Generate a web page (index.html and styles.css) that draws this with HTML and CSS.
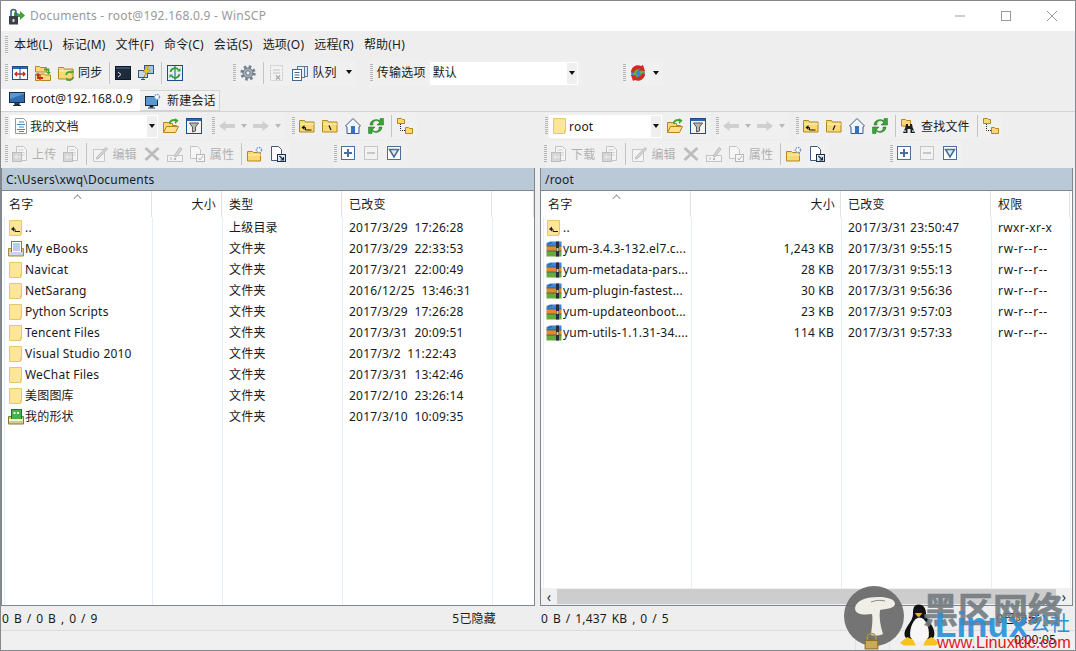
FILE: index.html
```html
<!DOCTYPE html>
<html lang="zh">
<head>
<meta charset="utf-8">
<title>Documents - root@192.168.0.9 - WinSCP</title>
<link rel="stylesheet" href="styles.css">
</head>
<body>
<svg class="defs" xmlns="http://www.w3.org/2000/svg">
  <symbol id="fld" viewBox="0 0 16 16"><path d="M.5 3.500V2.500h5l1 1.500h8.500v10H.5z" fill="#f9d976" stroke="#b5861c"/><path d="M1 6h14" stroke="#fff3c0"/></symbol>
  <symbol id="compare" viewBox="0 0 16 16"><rect x=".5" y="1.500" width="15" height="13" fill="#fff" stroke="#1c4c8c"/><rect x="1" y="2" width="14" height="2" fill="#2c66ad"/><path d="M8 2v12" stroke="#1c4c8c"/><path d="M3 9h10M5 7 3 9l2 2M11 7l2 2-2 2" fill="none" stroke="#c8261c" stroke-width="1.300"/></symbol>
  <symbol id="foldersync" viewBox="0 0 16 16"><path d="M.5 7V1.500h4l1 1h6V7z" fill="#f9d976" stroke="#b5861c"/><path d="M5.500 15.500V9h4l1 1h5v5.500z" fill="#f9d976" stroke="#b5861c"/><path d="M.5 15.500V9h4v6.500z" fill="#fbe08a" stroke="#b5861c"/><path d="M9 4.500h4.500V8" fill="none" stroke="#3fa535" stroke-width="1.800"/><path d="M11 7h5l-2.500 2.500z" fill="#3fa535"/><path d="M8 13H3V9.500" fill="none" stroke="#c8261c" stroke-width="1.800"/><path d="M.5 10.500h5L3 8z" fill="#c8261c"/></symbol>
  <symbol id="foldergreen" viewBox="0 0 16 16"><use href="#fld"/><path d="M8 10a3.500 3.500 0 0 1 6-2M15 12a3.500 3.500 0 0 1-6 2" fill="none" stroke="#3fa535" stroke-width="1.800"/><path d="M12.500 5.500h3v3zM11 15.500 8 15.500V12.500z" fill="#3fa535"/></symbol>
  <symbol id="term" viewBox="0 0 16 16"><rect x=".5" y="1.500" width="15" height="13" fill="#1f2a3a" stroke="#0f1622"/><rect x="1" y="2" width="14" height="2" fill="#33506f"/><path d="M3 7l3 2.500L3 12" fill="none" stroke="#d8e4ee"/></symbol>
  <symbol id="putty" viewBox="0 0 16 16"><rect x="6.500" y=".5" width="9" height="8" fill="#a7c4e2" stroke="#31557f"/><rect x=".5" y="5.500" width="9" height="7" fill="#c6d9ec" stroke="#31557f"/><path d="M3 14.500h4M5 12.500v2" stroke="#31557f"/><path d="M9 1 5 7h3L6 12l6-7H9l2-4z" fill="#f6c32d" stroke="#a67c10" stroke-width=".5"/></symbol>
  <symbol id="syncb" viewBox="0 0 16 16"><rect x=".5" y=".5" width="15" height="15" fill="#e7f0f8" stroke="#1c4c8c"/><path d="M8 1v14" stroke="#1c4c8c"/><path d="M3.500 7a4.500 4.500 0 0 1 8-2M12.500 9a4.500 4.500 0 0 1-8 2" fill="none" stroke="#2f9e35" stroke-width="1.700"/><path d="M10 6.500h3.500V3zM6 9.500H2.500V13z" fill="#2f9e35"/></symbol>
  <symbol id="gear" viewBox="0 0 16 16"><circle cx="8" cy="8" r="6.300" fill="none" stroke="#74808d" stroke-width="2.800" stroke-dasharray="2.500 2.450"/><circle cx="8" cy="8" r="5" fill="#a3aeb9" stroke="#66727f"/><circle cx="8" cy="8" r="2.200" fill="#eee" stroke="#66727f"/></symbol>
  <symbol id="check" viewBox="0 0 16 16"><rect x="1.500" y=".5" width="12" height="15" fill="#f1f1f1" stroke="#c8c8c8" stroke-dasharray="2 1"/><path d="M4 5h7M4 8h7" stroke="#c4c4c4"/><path d="M7 10.500l4 4M11 10.500l-4 4" stroke="#a8a8a8" stroke-width="1.300"/></symbol>
  <symbol id="queue" viewBox="0 0 16 16"><rect x="9.500" y="1.500" width="6" height="10" fill="#dbe6f0" stroke="#5a7a9c"/><rect x="5.500" y="1.500" width="7" height="11" fill="#e7eff6" stroke="#5a7a9c"/><rect x=".5" y="4.500" width="9" height="11" fill="#fff" stroke="#3e6690"/><path d="M2.500 7.500h5M2.500 10h5M2.500 12.500h5" stroke="#3e6690"/></symbol>
  <symbol id="globe" viewBox="0 0 16 16"><circle cx="8" cy="8" r="7" fill="#3f80d8"/><path d="M4 3l4 2-2 3 2 3-2 3-3-5zM10 5l4 1 1 3-4 2-1-3z" fill="#5fb34a"/><path d="M1 7a7 7 0 0 1 10-6l2-1 2 6-6-.5 1.500-1.500A5 5 0 0 0 4 8z" fill="#d42a20"/><path d="M15 9a7 7 0 0 1-10 6l-2 1-2-6 6 .5-1.500 1.500A5 5 0 0 0 12 8z" fill="#d42a20"/></symbol>
  <symbol id="monitor" viewBox="0 0 16 16"><rect x=".5" y="1.500" width="15" height="10" fill="#5a98d2" stroke="#1c2d42"/><path d="M1 8l14-5v8H1z" fill="#2e6eb0"/><path d="M6 12v1.500h4V12M4 14.500h8" stroke="#1c2d42" stroke-width="1.200" fill="#444"/></symbol>
  <symbol id="newsess" viewBox="0 0 16 16"><rect x=".5" y="3.500" width="12" height="9" fill="#5a98d2" stroke="#1c2d42"/><path d="M5 13v1h3v-1M3 15h7" stroke="#1c2d42"/><circle cx="12" cy="4" r="2.500" fill="#fff" stroke="#6c96c6" stroke-width="1.500" stroke-dasharray="1.500 .8"/></symbol>
  <symbol id="doc" viewBox="0 0 16 16"><path d="M2.500.5h8l3 3v12h-11z" fill="#fff" stroke="#8d99a5"/><path d="M6 4h5M4 6.500h8M6 9h5M4 11.500h8M6 13.500h5" stroke="#3a87c8"/></symbol>
  <symbol id="fopen" viewBox="0 0 16 16"><path d="M.5 14.500V4.500h5l1 1h3v2h4v2" fill="#f9d976" stroke="#b5861c"/><path d="M.5 14.500l3-6h12l-3 6z" fill="#fbe08a" stroke="#b5861c"/><path d="M6.500 5.500a4.500 4.500 0 0 1 6.500-3" fill="none" stroke="#3fa535" stroke-width="2"/><path d="M12 .2l3.600 2.300L12 6z" fill="#3fa535"/></symbol>
  <symbol id="filter" viewBox="0 0 16 16"><rect x=".5" y=".5" width="15" height="15" fill="#f3f3f3" stroke="#1c4c8c"/><rect x="1" y="1" width="14" height="2" fill="#2c66ad"/><path d="M3.500 5h9L9.500 9v4l-3 1V9z" fill="#b8b8b8" stroke="#555"/></symbol>
  <symbol id="back" viewBox="0 0 16 16"><path d="M0 8l6.500-5v3H16v4H6.500v3z" fill="#cfcfcf"/></symbol>
  <symbol id="fwd" viewBox="0 0 16 16"><path d="M16 8 9.500 3v3H0v4h9.500v3z" fill="#cfcfcf"/></symbol>
  <symbol id="fup" viewBox="0 0 16 16"><use href="#fld"/><path d="M2.500 9.500 5.500 7v5z" fill="#111"/><path d="M5 9.500h1.500V12H12.500" fill="none" stroke="#111"/></symbol>
  <symbol id="froot" viewBox="0 0 16 16"><use href="#fld"/><path d="M7 7.500l2 4.500" stroke="#111" stroke-width="1.200"/></symbol>
  <symbol id="froots" viewBox="0 0 16 16"><use href="#fld"/><path d="M9 7.500l-2 4.500" stroke="#111" stroke-width="1.200"/></symbol>
  <symbol id="home" viewBox="0 0 16 16"><path d="M8 .5 .5 8l1.500 1V15.500h12V9l1.500-1z" fill="#f2f5f8" stroke="#3c5d80"/><rect x="6" y="8" width="4" height="7.500" fill="#2f74c8"/></symbol>
  <symbol id="refresh" viewBox="0 0 16 16"><path d="M2 7A6 5.500 0 0 1 12 3V.5h3.500v6.500H9l2.500-2.500A3.500 3.500 0 0 0 5 7z" fill="#3aa335" stroke="#1f6e20" stroke-width=".5"/><path d="M14 9A6 5.500 0 0 1 4 13v2.500H.5V9H7l-2.500 2.500A3.500 3.500 0 0 0 11 9z" fill="#3aa335" stroke="#1f6e20" stroke-width=".5"/></symbol>
  <symbol id="tree" viewBox="0 0 16 16"><path d="M.5 5.500V.5h4l1 1h2v4zM8.500 15.500v-6h3l1 1h3v5z" fill="#f9d976" stroke="#b5861c"/><path d="M3.500 6v6.500h5" stroke="#222" stroke-dasharray="1 1" fill="none"/></symbol>
  <symbol id="upl" viewBox="0 0 16 16"><path d="M4.500 .5h7l3 3v11h-10z" fill="#f4f4f4" stroke="#c4c4c4"/><path d="M6.500 4h5M6.500 6.500h6M6.500 9h6" stroke="#cfcfcf"/><rect x=".5" y="6.500" width="9" height="9" fill="#d6d6d6" stroke="#bdbdbd"/><path d="M9 11H3M5 9l-2 2 2 2" stroke="#eee" fill="none"/></symbol>
  <symbol id="edit" viewBox="0 0 16 16"><path d="M1.500 3.500h11v12h-11z" fill="#f4f4f4" stroke="#c8c8c8"/><path d="M5 11l9-9.500 1.500 1.500L6.500 12.500 4.500 13z" fill="#d8d8d8" stroke="#b8b8b8"/></symbol>
  <symbol id="del" viewBox="0 0 16 16"><path d="M2.500 1 8 6l5.500-5L15.500 3 10 8l5.500 5-2 2L8 10l-5.500 5-2-2L6 8 .5 3z" fill="#bdbdbd"/></symbol>
  <symbol id="ren" viewBox="0 0 16 16"><rect x=".5" y="9.500" width="15" height="6" fill="#f4f4f4" stroke="#c4c4c4"/><path d="M4 11v3M7 12l2 2M9 12l-2 2" stroke="#b8b8b8"/><path d="M7 10l6-8.500 2 1.500-6 8z" fill="#d8d8d8" stroke="#b8b8b8"/></symbol>
  <symbol id="prop" viewBox="0 0 16 16"><path d="M.5 .5h7l3 3v9h-10z" fill="#f6f6f6" stroke="#c4c4c4"/><rect x="6.500" y="8.500" width="8" height="7" fill="#f6f6f6" stroke="#b8b8b8"/><path d="M8.500 12l1.500 2 3-4" fill="none" stroke="#b0b0b0"/></symbol>
  <symbol id="newf" viewBox="0 0 16 16"><path d="M.5 15V5.500h5l1 1h7V15z" fill="#f9d976" stroke="#b5861c"/><path d="M1 9h13" stroke="#fff0b0"/><circle cx="12" cy="4" r="2.500" fill="#fff" stroke="#7298c6" stroke-width="1.500" stroke-dasharray="1.500 .8"/></symbol>
  <symbol id="short" viewBox="0 0 16 16"><path d="M1.500 .5h7l3 3v11h-10z" fill="#fff" stroke="#3e5b7a"/><rect x="7.500" y="8.500" width="8" height="7" fill="#dde8f2" stroke="#1d2f45"/><path d="M9.500 10l4 4M13.500 11v3h-3" fill="none" stroke="#1d2f45" stroke-width="1.200"/></symbol>
  <symbol id="plus" viewBox="0 0 16 16"><rect x=".5" y=".5" width="13" height="13" fill="#fff" stroke="#4a6f9c"/><path d="M3 7h8M7 3v8" stroke="#4a6f9c" stroke-width="2"/></symbol>
  <symbol id="minus" viewBox="0 0 16 16"><rect x=".5" y=".5" width="13" height="13" fill="#f2f2f2" stroke="#c6c6c6"/><path d="M3 7h8" stroke="#c6c6c6" stroke-width="2"/></symbol>
  <symbol id="sel" viewBox="0 0 16 16"><rect x=".5" y=".5" width="13" height="13" fill="#fff" stroke="#4a6f9c"/><path d="M2.500 3.500h9L7 11z" fill="#dfe8f2" stroke="#4a6f9c" stroke-width="1.600"/></symbol>
  <symbol id="binoc" viewBox="0 0 16 16"><path d="M.5 8V1.500h4l1 1h4v6z" fill="#f9d976" stroke="#b5861c"/><path d="M5 6h2v2h2V6h2l.5 3L14 15H9.500V11h-3v4H2l2.500-6z" fill="#1e2024"/><rect x="3" y="12" width="2" height="2" fill="#8aa"/><rect x="11" y="12" width="2" height="2" fill="#8aa"/></symbol>
  <symbol id="pf" viewBox="0 0 16 16"><path d="M1.500 .5h12v13l-1 2h-11z" fill="#fde59a" stroke="#e6c66e"/><path d="M12.500 12.500h1M12.500 12.500v3" stroke="#e6c66e"/></symbol>
  <symbol id="pfup" viewBox="0 0 16 16"><use href="#pf"/><path d="M3 9 6 6.500v5z" fill="#222"/><path d="M5.500 9H7v2.500h5" fill="none" stroke="#222"/></symbol>
  <symbol id="ebook" viewBox="0 0 16 16"><path d="M.5 7.500h15v7.500H.5z" fill="#e3c67a" stroke="#a98a42"/><rect x="3.500" y=".5" width="10" height="11" fill="#fff" stroke="#4c7fb5"/><path d="M5 3h7M5 5h7M5 7h7M5 9h7" stroke="#6a9ecf"/><path d="M1 11h14v3H1z" fill="#c6d9ec"/></symbol>
  <symbol id="shape" viewBox="0 0 16 16"><path d="M.5 7.500h15V15H.5z" fill="#e3c67a" stroke="#8a7a30"/><rect x="3.500" y=".5" width="10" height="11" fill="#48b04c" stroke="#21752a"/><path d="M5.500 3h2v2h-2zM9 3h2v2H9z" fill="#eaf7e0"/><path d="M1 10h14v2H1z" fill="#eef5dd"/></symbol>
  <symbol id="rpm" viewBox="0 0 16 16"><path d="M.5 2 4 .5h11.500V5H.5z" fill="#3f86d6"/><path d="M.5 5h15v5H.5z" fill="#e08a2c"/><path d="M.5 10h15v5.500H.5z" fill="#63ab3a"/><rect x="10" y=".5" width="3" height="15" fill="#2b2b3a"/><path d="M2 3 6 1.500M.5 5h15M.5 10h15" stroke="#1f3f66" stroke-width=".6"/><rect x="10.500" y="7" width="2" height="3" fill="#e8d060"/></symbol>
</svg>

<div class="win">
  <header class="titlebar">
    <svg class="appicon" viewBox="0 0 17 17"><path d="M6 4l6 2v-3l5 4.500-5 4.500V9H9v5H6z" fill="#3fa535"/><rect x="1" y="8" width="9" height="8.500" fill="#3c3f46"/><path d="M3 8V4a2.500 2.500 0 0 1 5 0v4" fill="none" stroke="#3c5f9a" stroke-width="1.600"/><rect x="4.500" y="11" width="2" height="3" fill="#ddd"/></svg>
    <span class="titletext">Documents - root@192.168.0.9 - WinSCP</span>
    <div class="winbtns">
      <svg class="wb" viewBox="0 0 46 30"><path d="M18 15h10" stroke="#999"/></svg>
      <svg class="wb" viewBox="0 0 46 30"><rect x="18.500" y="10.500" width="9" height="9" fill="none" stroke="#999"/></svg>
      <svg class="wb" viewBox="0 0 46 30"><path d="M18 10l10 10M28 10 18 20" stroke="#999" fill="none"/></svg>
    </div>
  </header>

  <nav class="menubar">
    <i class="grip"></i>
    <span>本地(L)</span><span>标记(M)</span><span>文件(F)</span><span>命令(C)</span><span>会话(S)</span><span>选项(O)</span><span>远程(R)</span><span>帮助(H)</span>
  </nav>

  <div class="tbrow r-top">
    <div class="grp">
      <i class="grip"></i>
      <svg class="ic"><use href="#compare"/></svg>
      <svg class="ic"><use href="#foldersync"/></svg>
      <span class="btn"><svg class="ic"><use href="#foldergreen"/></svg>同步</span>
      <i class="sep"></i>
      <svg class="ic"><use href="#term"/></svg>
      <svg class="ic"><use href="#putty"/></svg>
      <i class="sep"></i>
      <svg class="ic"><use href="#syncb"/></svg>
    </div>
    <div class="grp m50">
      <i class="grip"></i>
      <svg class="ic"><use href="#gear"/></svg>
      <i class="sep"></i>
      <svg class="ic"><use href="#check"/></svg>
      <span class="btn"><svg class="ic"><use href="#queue"/></svg>队列<b class="dd mdd"></b></span>
    </div>
    <div class="grp m21">
      <i class="grip"></i>
      <span class="lbl">传输选项</span>
      <div class="combo c148"><span class="ctext">默认</span><b class="cbtn"><b class="dd"></b></b></div>
    </div>
    <div class="grp m48">
      <i class="grip"></i>
      <svg class="ic"><use href="#globe"/></svg>
      <b class="dd"></b>
    </div>
  </div>

  <div class="tabs">
    <div class="tab on"><svg class="ic"><use href="#monitor"/></svg>root@192.168.0.9</div>
    <div class="tab off"><svg class="ic"><use href="#newsess"/></svg>新建会话</div>
  </div>

  <div class="tbrow bordered">
    <div class="half lhalf">
      <div class="grp"><i class="grip g2"></i>
        <div class="combo c148"><svg class="ic"><use href="#doc"/></svg><span class="ctext t4">我的文档</span><b class="cbtn"><b class="dd"></b></b></div>
        <svg class="ic m5"><use href="#fopen"/></svg><svg class="ic"><use href="#filter"/></svg>
      </div>
      <div class="grp nav m10"><i class="grip"></i>
        <svg class="ic first"><use href="#back"/></svg><b class="dd dis"></b><svg class="ic"><use href="#fwd"/></svg><b class="dd dis"></b>
      </div>
      <div class="grp m8"><i class="grip"></i>
        <svg class="ic"><use href="#fup"/></svg><svg class="ic"><use href="#froot"/></svg><svg class="ic"><use href="#home"/></svg><svg class="ic"><use href="#refresh"/></svg>
        <i class="sep"></i>
        <svg class="ic"><use href="#tree"/></svg>
      </div>
    </div>
    <div class="half rhalf">
      <div class="grp"><i class="grip g1"></i>
        <div class="combo c113"><svg class="ic"><use href="#pf"/></svg><span class="ctext t4">root</span><b class="cbtn"><b class="dd"></b></b></div>
        <svg class="ic m5"><use href="#fopen"/></svg><svg class="ic"><use href="#filter"/></svg>
      </div>
      <div class="grp nav m10"><i class="grip"></i>
        <svg class="ic first"><use href="#back"/></svg><b class="dd dis"></b><svg class="ic"><use href="#fwd"/></svg><b class="dd dis"></b>
      </div>
      <div class="grp m8"><i class="grip"></i>
        <svg class="ic"><use href="#fup"/></svg><svg class="ic"><use href="#froots"/></svg><svg class="ic"><use href="#home"/></svg><svg class="ic"><use href="#refresh"/></svg>
        <i class="sep"></i>
        <span class="btn"><svg class="ic"><use href="#binoc"/></svg>查找文件</span>
        <i class="sep"></i>
        <svg class="ic"><use href="#tree"/></svg>
      </div>
    </div>
  </div>

  <div class="tbrow">
    <div class="half lhalf">
      <div class="grp"><i class="grip"></i>
        <span class="btn off"><svg class="ic"><use href="#upl"/></svg>上传</span><svg class="ic"><use href="#upl"/></svg>
        <i class="sep"></i>
        <span class="btn off"><svg class="ic"><use href="#edit"/></svg>编辑</span><svg class="ic"><use href="#del"/></svg><svg class="ic"><use href="#ren"/></svg>
        <span class="btn off"><svg class="ic"><use href="#prop"/></svg>属性</span>
        <i class="sep"></i>
        <svg class="ic"><use href="#newf"/></svg><svg class="ic"><use href="#short"/></svg>
      </div>
      <div class="grp m45"><i class="grip"></i>
        <svg class="ic"><use href="#plus"/></svg><svg class="ic"><use href="#minus"/></svg><svg class="ic"><use href="#sel"/></svg>
      </div>
    </div>
    <div class="half rhalf">
      <div class="grp"><i class="grip gr"></i>
        <span class="btn off"><svg class="ic"><use href="#upl"/></svg>下载</span><svg class="ic"><use href="#upl"/></svg>
        <i class="sep"></i>
        <span class="btn off"><svg class="ic"><use href="#edit"/></svg>编辑</span><svg class="ic"><use href="#del"/></svg><svg class="ic"><use href="#ren"/></svg>
        <span class="btn off"><svg class="ic"><use href="#prop"/></svg>属性</span>
        <i class="sep"></i>
        <svg class="ic"><use href="#newf"/></svg><svg class="ic"><use href="#short"/></svg>
      </div>
      <div class="grp m66"><i class="grip"></i>
        <svg class="ic"><use href="#plus"/></svg><svg class="ic"><use href="#minus"/></svg><svg class="ic"><use href="#sel"/></svg>
      </div>
    </div>
  </div>

  <main class="panels">
    <section class="panel pl">
      <div class="path">C:\Users\xwq\Documents</div>
      <div class="head cols-l"><span>名字</span><span class="num">大小</span><span>类型</span><span>已改变</span><span></span><i class="caret"></i></div>
      <div class="list list-l">
        <div class="row cols-l"><span class="nm"><svg class="ic"><use href="#pfup"/></svg>..</span><span></span><span>上级目录</span><span>2017/3/29  17:26:28</span></div>
        <div class="row cols-l"><span class="nm"><svg class="ic"><use href="#ebook"/></svg>My eBooks</span><span></span><span>文件夹</span><span>2017/3/29  22:33:53</span></div>
        <div class="row cols-l"><span class="nm"><svg class="ic"><use href="#pf"/></svg>Navicat</span><span></span><span>文件夹</span><span>2017/3/21  22:00:49</span></div>
        <div class="row cols-l"><span class="nm"><svg class="ic"><use href="#pf"/></svg>NetSarang</span><span></span><span>文件夹</span><span>2016/12/25  13:46:31</span></div>
        <div class="row cols-l"><span class="nm"><svg class="ic"><use href="#pf"/></svg>Python Scripts</span><span></span><span>文件夹</span><span>2017/3/29  17:26:28</span></div>
        <div class="row cols-l"><span class="nm"><svg class="ic"><use href="#pf"/></svg>Tencent Files</span><span></span><span>文件夹</span><span>2017/3/31  20:09:51</span></div>
        <div class="row cols-l"><span class="nm"><svg class="ic"><use href="#pf"/></svg>Visual Studio 2010</span><span></span><span>文件夹</span><span>2017/3/2  11:22:43</span></div>
        <div class="row cols-l"><span class="nm"><svg class="ic"><use href="#pf"/></svg>WeChat Files</span><span></span><span>文件夹</span><span>2017/3/31  13:42:46</span></div>
        <div class="row cols-l"><span class="nm"><svg class="ic"><use href="#pf"/></svg>美图图库</span><span></span><span>文件夹</span><span>2017/2/10  23:26:14</span></div>
        <div class="row cols-l"><span class="nm"><svg class="ic"><use href="#shape"/></svg>我的形状</span><span></span><span>文件夹</span><span>2017/3/10  10:09:35</span></div>
      </div>
    </section>
    <section class="panel pr">
      <div class="path">/root</div>
      <div class="head cols-r"><span>名字</span><span class="num">大小</span><span>已改变</span><span>权限</span><i class="caret"></i></div>
      <div class="list list-r">
        <div class="row cols-r"><span class="nm"><svg class="ic"><use href="#pfup"/></svg>..</span><span></span><span>2017/3/31 23:50:47</span><span class="pw">rwxr-xr-x</span></div>
        <div class="row cols-r"><span class="nm"><svg class="ic"><use href="#rpm"/></svg>yum-3.4.3-132.el7.c...</span><span class="num">1,243 KB</span><span>2017/3/31 9:55:15</span><span class="perm">rw-r--r--</span></div>
        <div class="row cols-r"><span class="nm"><svg class="ic"><use href="#rpm"/></svg>yum-metadata-pars...</span><span class="num">28 KB</span><span>2017/3/31 9:55:13</span><span class="perm">rw-r--r--</span></div>
        <div class="row cols-r"><span class="nm"><svg class="ic"><use href="#rpm"/></svg>yum-plugin-fastest...</span><span class="num">30 KB</span><span>2017/3/31 9:56:36</span><span class="perm">rw-r--r--</span></div>
        <div class="row cols-r"><span class="nm"><svg class="ic"><use href="#rpm"/></svg>yum-updateonboot...</span><span class="num">23 KB</span><span>2017/3/31 9:57:03</span><span class="perm">rw-r--r--</span></div>
        <div class="row cols-r"><span class="nm"><svg class="ic"><use href="#rpm"/></svg>yum-utils-1.1.31-34....</span><span class="num">114 KB</span><span>2017/3/31 9:57:33</span><span class="perm">rw-r--r--</span></div>
      </div>
      <div class="hscroll"><span class="arr">&#x2039;</span><div class="thumb"></div><span class="arr">&#x203A;</span></div>
    </section>
  </main>

  <div class="status">
    <div class="st sl"><span>0 B / 0 B , 0 / 9</span><span>5已隐藏</span></div>
    <div class="st sr"><span>0 B / 1,437 KB , 0 / 5</span><span>0已隐藏</span></div>
  </div>
  <footer class="bottom">
    <span class="cell grow"></span><span class="cell c1"></span><span class="cell c2"></span><span class="cell c3"></span><span class="cell c4">0:00:05</span>
  </footer>

  <div class="wm">
    <svg class="wm-badge" viewBox="0 0 60 60">
      <circle cx="30" cy="30" r="30" fill="#6b6b6b" fill-opacity=".93"/>
      <path d="M11 22c1-8 12-11 24-11 8 0 16 2 16 7 0 4-9 5-15 6-1 7 0 15 3 24-4 2-9 2-12 1 1-9 2-15 1-21-8 1-17 1-17-6z" fill="#efefe8"/>
      <path d="M27 16c5-2 10-2 14-1" stroke="#8a8a8a" fill="none"/>
    </svg>
    <svg class="wm-lock" viewBox="0 0 14 16"><path d="M3 7V4.500a4 4 0 0 1 8 0V7" fill="none" stroke="#b09040" stroke-width="1.500"/><rect x="1" y="7" width="12" height="8" fill="#c9a95a" stroke="#8a6d28"/></svg>
    <svg class="wm-tux" viewBox="0 0 42 46">
      <path d="M20 1c6 0 8 5 8 10 0 5 5 9 8 16 2 6 1 10-2 11H8c-4-2-4-7-1-12 3-5 7-9 7-15 0-6 1-10 6-10z" fill="#111"/>
      <path d="M21 15c6 0 11 10 10 20-1 4-5 5-10 5s-9-1-10-5c-1-9 4-20 10-20z" fill="#f7f7f7"/>
      <path d="M16 10h8l-3 4h-2z" fill="#f2b01e"/>
      <path d="M8 36l6 3 3 6H4l-4-3zM34 36l-6 3-3 6h13l4-3z" fill="#f6c21c"/>
    </svg>
    <span class="wm-cn">黑区网络</span>
    <span class="wm-linux">Linux</span>
    <span class="wm-gs">公社</span>
    <span class="wm-url">www.Linuxidc.com</span>
  </div>
</div>
</body>
</html>
```
FILE: styles.css
```css
* { box-sizing: border-box; }
html, body { margin: 0; padding: 0; height: 100%; overflow: hidden; }
body { font: 12px/16px "Noto Sans", "Noto Sans CJK SC", sans-serif; color: #1a1a1a; background: #eee; letter-spacing: .2px; }
.defs { position: absolute; width: 0; height: 0; }
.win { position: relative; width: 1076px; height: 651px; display: flex; flex-direction: column; border: 1px solid #85898e; background: #eee; overflow: hidden; }

.titlebar { height: 30px; background: #fff; display: flex; align-items: center; padding-left: 7px; flex: none; }
.appicon { width: 17px; height: 17px; margin-right: 5px; }
.titletext { color: #999; flex: 1; letter-spacing: .25px; }
.winbtns { display: flex; }
.wb { width: 46px; height: 30px; }

.menubar { height: 29px; display: flex; align-items: center; gap: 10px; flex: none; padding: 0 0 2px 4px; }
.menubar .grip { margin-right: -4px; }

.grip { display: block; flex: none; width: 3px; height: 18px; margin-right: -3px; background: repeating-linear-gradient(#b4b4b4 0 1px, transparent 1px 2px); }
.grp { display: flex; align-items: center; gap: 7px; height: 26px; flex: none; background: #f0f0f0; padding-right: 4px; }
.nav { gap: 6px; }
.nav .first { margin-left: 1px; }
.grip.g2 { margin-right: -5px; }
.grip.g1 { margin-right: -6px; }
.gr { margin-left: -1px; }
.m5 { margin-left: -2px; }
.m8 { margin-left: 7px; }
.m10 { margin-left: 6px; }
.m21 { margin-left: 14px; }
.m45 { margin-left: 44px; }
.m48 { margin-left: 41px; }
.m50 { margin-left: 46px; }
.m66 { margin-left: 61px; }

.tbrow { height: 28px; display: flex; align-items: center; padding-left: 4px; flex: none; }
.r-top { padding-bottom: 2px; }
.tbrow.bordered { border-top: 1px solid #d2d2d2; height: 29px; }
.half { display: flex; align-items: center; flex: none; }
.lhalf { width: 540px; }
.rhalf { flex: 1; }
.ic { width: 16px; height: 16px; flex: none; display: block; }
.sep { display: block; flex: none; width: 1px; height: 22px; background: #c4c4c4; margin-right: -2px; }
.btn { display: flex; align-items: center; gap: 4px; flex: none; }
.btn.off { color: #b0b0b0; }
.half .btn { padding-top: 2px; }
.half .btn .ic { margin-top: -2px; }
.dd { display: block; flex: none; width: 0; height: 0; border: 3.5px solid transparent; border-top: 4px solid #111; border-bottom: 0; }
.dd.dis { border-top-color: #b8b8b8; }
.mdd { margin-left: 5px; margin-top: -2px; }
.lbl { margin-right: -3px; }
.combo { height: 23px; background: #fff; display: flex; align-items: center; padding: 0 1px 0 3px; flex: none; }
.c148 { width: 148px; }
.c113 { width: 113px; }
.ctext { flex: 1; }
.t4 { padding-left: 1px; }
.half .ctext { padding-top: 2px; }
.cbtn { width: 10px; height: 21px; background: #efefef; display: flex; align-items: center; justify-content: center; }

.tabs { height: 23px; display: flex; align-items: flex-end; flex: none; }
.tab { display: flex; align-items: center; padding-bottom: 2px; }
.tab.on { width: 139px; height: 22px; background: #fff; padding-left: 8px; gap: 6px; }
.tab.off { width: 80px; height: 21px; background: #f2f2f2; border: 1px solid #d4d4d4; border-left: 0; padding-left: 5px; gap: 6px; padding-bottom: 0; }

.panels { flex: 1; min-height: 0; display: flex; padding: 0 2px 0 0; gap: 5px; }
.panel { position: relative; display: flex; flex-direction: column; border: 1px solid #7e8690; border-top: 0; }
.pl { width: 534px; }
.pr { flex: 1; }
.path { height: 23px; background: #b9c9d8; border-bottom: 1px solid #7e8690; padding: 4px 0 0 4px; flex: none; }
.head { height: 26px; background: #fff; position: relative; align-items: center; flex: none; }
.head > span { padding-left: 7px; height: 26px; line-height: 27px; border-right: 1px solid #e3e3e3; }
.head > .num { text-align: right; padding-right: 5px; }
.caret { position: absolute; top: 4px; width: 7px; height: 7px; border-left: 1px solid #777; border-top: 1px solid #777; transform: rotate(45deg) scale(.8); }
.pl .caret { left: 72px; }
.pr .caret { left: 72px; }
.cols-l { display: grid; grid-template-columns: 150px 70px 120px 150px 1fr; }
.cols-r { display: grid; grid-template-columns: 150px 150px 150px 79px 1fr; }
.list { flex: 1; min-height: 0; background-color: #fff; background-repeat: no-repeat; background-size: 1px 100%; }
.list-l { background-image: linear-gradient(#e6eefa, #e6eefa), linear-gradient(#e6eefa, #e6eefa), linear-gradient(#e6eefa, #e6eefa), linear-gradient(#e6eefa, #e6eefa), linear-gradient(#e6eefa, #e6eefa); background-position: 2px 0, 150px 0, 220px 0, 340px 0, 490px 0; }
.list-r { background-image: linear-gradient(#e6eefa, #e6eefa), linear-gradient(#e6eefa, #e6eefa), linear-gradient(#e6eefa, #e6eefa), linear-gradient(#e6eefa, #e6eefa), linear-gradient(#e6eefa, #e6eefa); background-position: 2px 0, 150px 0, 300px 0, 450px 0, 529px 0; }
.row { height: 21px; align-items: center; white-space: pre; }
.row > span { padding-left: 7px; overflow: hidden; }
.row > .num { text-align: right; padding-right: 7px; }
.row > .nm { display: flex; align-items: center; gap: 1px; padding-left: 6px; }
.pr .row > .nm { padding-left: 5px; }
.row > .perm { letter-spacing: .7px; }
.row > .pw { letter-spacing: .35px; }
.hscroll { height: 17px; display: flex; align-items: center; background: #f0f0f0; flex: none; }
.arr { width: 16px; text-align: center; font-size: 14px; color: #333; }
.thumb { flex: 1; height: 15px; background: #cdcdcd; }

.status { height: 24px; display: flex; padding-right: 2px; gap: 5px; flex: none; }
.st { display: flex; justify-content: space-between; align-items: center; padding: 2px 0 0 1px; word-spacing: 1.5px; }
.sl { width: 534px; padding-right: 39px; }
.sr { flex: 1; padding-right: 33px; }
.bottom { height: 20px; flex: none; border-top: 1px solid #dcdcdc; display: flex; background: #f0f0f0; }
.cell { border-right: 1px solid #e2e2e2; line-height: 18px; }
.grow { flex: 1; }
.c1 { width: 34px; }
.c2 { width: 84px; }
.c3 { width: 19px; }
.c4 { width: 82px; padding-left: 21px; border-right: 0; }

.wm { position: absolute; left: 840px; top: 584px; width: 236px; height: 67px; pointer-events: none; }
.wm-badge { position: absolute; left: 3px; top: 1px; width: 60px; height: 60px; }
.wm-lock { position: absolute; left: 23px; top: 48px; width: 15px; height: 17px; }
.wm-tux { position: absolute; left: 59px; top: 18px; width: 39px; height: 44px; }
.wm-cn { position: absolute; left: 82px; top: 3px; font: bold 35px/40px "Noto Sans CJK SC", sans-serif; color: #737b82; opacity: .9; white-space: nowrap; letter-spacing: 0; -webkit-text-stroke: .6px #737b82; }
.wm-linux { position: absolute; left: 94px; top: 20px; font: bold 35px/40px "Liberation Sans", sans-serif; color: #2a92d8; opacity: .92; letter-spacing: 0; }
.wm-gs { position: absolute; left: 189px; top: 26px; font: 20px/24px "Noto Sans CJK SC", sans-serif; color: #2a92d8; letter-spacing: 0; }
.wm-url { position: absolute; left: 96px; top: 48px; font: 16.300px/18px "Liberation Sans", sans-serif; color: #e01818; white-space: nowrap; letter-spacing: 0; }
```
